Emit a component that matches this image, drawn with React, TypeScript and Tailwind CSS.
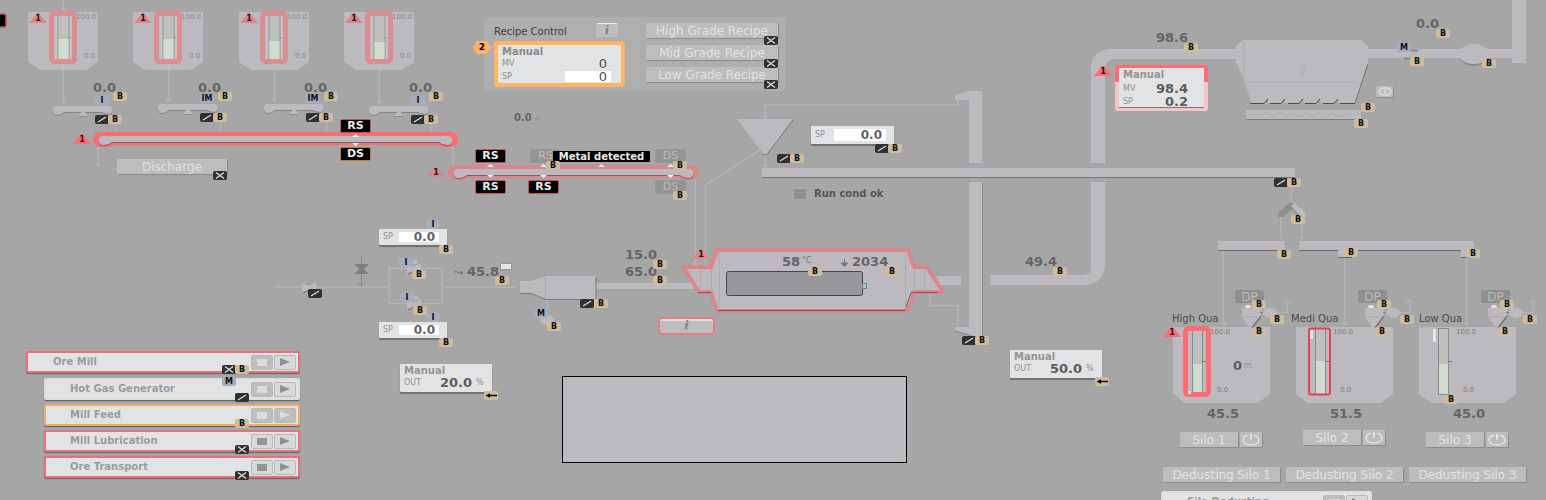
import React from "react";
import type { ReactNode } from "react";

type Kind = "B" | "I" | "IM" | "M" | "slash" | "cross" | "arrow";
type Mark = [Kind, number, number];

const SHAPE = "#bcbabe";
const LINE = "#b4b3b6";
const SHADOW = "#757575";
const ALARM = "#ff6b72";
const ALARM_MUTED = "#da868b";

const at = (x: number, y: number) => ({ left: x, top: y });

function Node({ x, y, className = "", children }: { x: number; y: number; className?: string; children: ReactNode }) {
  return (
    <div className={`absolute ${className}`} style={at(x, y)}>
      {children}
    </div>
  );
}

/* Text anchored at its left edge and vertical centre */
function Label({ x, y, className = "", children }: { x: number; y: number; className?: string; children: ReactNode }) {
  return (
    <span className={`absolute whitespace-nowrap leading-4 ${className}`} style={at(x, y - 8)}>
      {children}
    </span>
  );
}

function Value({ x, y, children }: { x: number; y: number; children: ReactNode }) {
  return (
    <Label x={x} y={y} className="text-[13px] font-bold text-[#646464]">
      {children}
    </Label>
  );
}

function Badge({ kind, x, y }: { kind: Kind; x: number; y: number }) {
  const pos = at(x - 7, y - 4);
  if (kind === "slash" || kind === "cross") {
    return (
      <svg className="absolute h-[9px] w-[14px]" style={pos} viewBox="0 0 14 9" aria-hidden="true">
        <rect width="14" height="9" rx="2" fill="#303030" />
        <path d={kind === "slash" ? "M3 7 L11 2" : "M3 1.500 L11 7.500 M3 7.500 L11 1.500"} stroke="#dcdcdc" strokeWidth="1.3" />
      </svg>
    );
  }
  if (kind === "arrow") {
    return (
      <svg className="absolute h-[9px] w-[14px]" style={pos} viewBox="0 0 14 9" aria-hidden="true">
        <rect width="14" height="9" rx="2" fill="#cfbc9d" />
        <path d="M1.5 4.5 L6 2.2 V3.8 H13 V5.2 H6 V6.8 Z" fill="#000" />
      </svg>
    );
  }
  const tone = kind === "B" ? "bg-[#cfbc9d]" : "bg-[#a5adbf]";
  return (
    <span
      className={`absolute flex h-[9px] min-w-[14px] items-center justify-center rounded-[2px] text-[8px] leading-[9px] font-bold text-[#101010] ${tone}`}
      style={pos}
    >
      {kind}
    </span>
  );
}

function AlarmTriangle({ x, y, bright = false }: { x: number; y: number; bright?: boolean }) {
  return (
    <Node x={x - 9} y={y} className="flex h-[11px] w-[18px] items-end justify-center">
      <svg className="absolute inset-0" viewBox="0 0 18 11" aria-hidden="true">
        <path d="M9 0 L18 11 H0 Z" fill={bright ? ALARM : ALARM_MUTED} />
      </svg>
      <span className="relative text-[8px] leading-[9px] font-bold text-[#1c1010]">1</span>
    </Node>
  );
}

const tagTones = {
  red: "bg-black text-[#ececec] border-[#c4525c] font-bold",
  orange: "bg-black text-[#ececec] border-[#c47a3c] font-bold",
  idle: "bg-[#949494] text-[#bdbdb0] border-[#989898]",
};

function Tag({ x, y, tone, children }: { x: number; y: number; tone: keyof typeof tagTones; children: ReactNode }) {
  return (
    <span
      className={`absolute flex h-[14px] w-[31px] items-center justify-center rounded-[2px] border text-[11px] leading-3 ${tagTones[tone]}`}
      style={at(x - 15, y - 7)}
    >
      {children}
    </span>
  );
}

const raised = "rounded-[1px] bg-[#bdbdbd] shadow-[1px_1px_1px_#8a8a8a]";

function PlainButton({ x, y, className = "", children }: { x: number; y: number; className?: string; children: ReactNode }) {
  return (
    <button
      type="button"
      className={`absolute flex h-[15px] items-center justify-center whitespace-nowrap text-[12px] leading-[14px] text-[#e2e2e2] ${raised} ${className}`}
      style={at(x, y)}
    >
      {children}
    </button>
  );
}

function PowerButton({ x, y, name }: { x: number; y: number; name: string }) {
  return (
    <button type="button" aria-label={name} className={`absolute flex h-[15px] w-[22px] items-center justify-center ${raised}`} style={at(x, y)}>
      <svg className="h-[13px] w-[20px]" viewBox="0 0 20 13" fill="none" stroke="#e2e2e2" strokeWidth="1.5" aria-hidden="true">
        <path d="M6.500 2.200 C-0.500 5 1 12 10 12 C19 12 20.500 5 13.500 2.200" />
        <path d="M10 1 V6.500" strokeWidth="2" />
      </svg>
    </button>
  );
}

const panel = "bg-[#e1e3e5] shadow-[0_2px_1px_#707070]";

function SetpointPanel({ x, y, id, name, wide = false }: { x: number; y: number; id: string; name: string; wide?: boolean }) {
  return (
    <Node x={x} y={y} className={`flex items-center rounded-[1px] pl-1 ${panel} ${wide ? "h-[18px] w-[83px] pr-2" : "h-4 w-[68px] pr-2"}`}>
      <label htmlFor={id} aria-label={name} className={`text-[8px] leading-3 text-[#8f8f8f] ${wide ? "w-[19px]" : "w-4"}`}>
        SP
      </label>
      <input
        id={id}
        defaultValue="0.0"
        className={`min-w-0 flex-1 bg-white pr-1 text-right text-[12px] font-bold text-[#646464] outline-none ${
          wide ? "h-3 leading-3" : "h-[10px] leading-[10px]"
        }`}
      />
    </Node>
  );
}

function OutputPanel({ x, y, value }: { x: number; y: number; value: string }) {
  return (
    <Node x={x} y={y} className={`flex h-7 w-[92px] flex-col rounded-[1px] px-1 pt-[1px] ${panel}`}>
      <span className="text-[10px] leading-3 font-bold text-[#949494]">Manual</span>
      <div className="flex items-center text-[8px] leading-3 text-[#8f8f8f]">
        <span className="w-8">OUT</span>
        <span className="flex-1 text-right text-[13px] font-bold text-[#5c5c5c]">{value}</span>
        <span className="ml-1 w-3">%</span>
      </div>
    </Node>
  );
}

/* ---------- drawings ---------- */

function Belt({ x1, x2, y, color }: { x1: number; x2: number; y: number; color: string }) {
  const inner = `M${x1 + 10} ${y + 4} H${x2 - 10} a4.500 4.500 0 0 1 0 9 q-5 0.500 -9 -3 H${x1 + 19} q-4 3.500 -9 3 a4.500 4.500 0 0 1 0 -9 Z`;
  return (
    <g>
      <path
        d={`M${x1 + 7} ${y} H${x2 - 7} a7 7.500 0 0 1 0 15 q-8 1 -14 -2 H${x1 + 21} q-6 3 -14 2 a7 7.500 0 0 1 0 -15 Z`}
        fill={color}
      />
      <path d={inner} fill="#8a5a60" transform="translate(0 1)" />
      <path d={inner} fill={SHAPE} />
    </g>
  );
}

function FeedTank({ x, dy, level }: { x: number; dy: number; level: number }) {
  return (
    <g transform={`translate(${x} 0)`}>
      <path d="M0 12 H70 V62 L58 70 H12 L0 62 Z" fill={SHAPE} />
      <rect x="27" y="14" width="17" height="47" fill="#c4c2c5" />
      <rect x="30" y="14" width="11" height="47" fill="#bfbfbf" stroke="#969696" />
      <rect x="30.5" y={level} width="10" height={61 - level} fill="#d0dccf" />
      <path d="M41 37.500 h2" stroke="#909090" />
      <rect x="23.500" y="13.500" width="23" height="48" rx="3" fill="none" stroke="#dc8d92" strokeWidth="5" />
      <path d={`M35.500 70 V${103 + dy} m-2 -2 l2 2 l2 -2`} stroke={LINE} fill="none" strokeWidth="1.500" />
      <g transform={`translate(0 ${dy})`}>
        <path d="M27 107 H82 a5 4.500 0 0 1 0 8 q-5 0 -8 -2 H36 q-3 3 -8 3 a5 5 0 0 1 -1 -9 Z" fill="#858585" />
        <path d="M27 106 H82 a5 4.500 0 0 1 0 8 q-5 0 -8 -2 H36 q-3 3 -8 3 a5 5 0 0 1 -1 -9 Z" fill={SHAPE} />
        <path d="M50 116.500 H60" stroke="#8f8f8f" />
        <path d="M50 116 L55 110 L60 116 Z" fill={SHAPE} />
      </g>
      <path d="M87.500 119 V131" stroke={LINE} strokeWidth="1.500" />
    </g>
  );
}

function Silo({ x, level }: { x: number; level: number }) {
  return (
    <g transform={`translate(${x} 0)`}>
      <path d="M0 327 H97 V394 L85 403 H12 L0 394 Z" fill={SHAPE} />
      <rect x="19.500" y="328.500" width="10" height="66" fill="#bfbfbf" stroke="#8a8a8a" />
      <rect x="20" y={level} width="9" height={394 - level} fill="#d0dccf" />
      <path d="M30 361.500 h3" stroke="#707070" />
    </g>
  );
}

function DustFilter({ x }: { x: number }) {
  return (
    <g transform={`translate(${x} 0)`}>
      <path d="M3 308 H20 V316 L12 328 H9 L1 317 V308 Z" fill={SHAPE} />
      <path d="M20 316 L11 328" stroke="#6f6f6f" strokeWidth="1.300" />
      <path d="M1 317 H19" stroke="#aaa8ac" />
      <rect x="4" y="305" width="6" height="3" rx="1.500" fill="#e4e4e4" />
      <path d="M19 312.500 H46 V302 m-4 1 l4 -3 l4 3" stroke={LINE} fill="none" strokeWidth="1.500" />
      <path d="M19 312.500 h6" stroke="#808080" />
      <ellipse cx="29" cy="313" rx="7" ry="5" fill={SHAPE} />
    </g>
  );
}

function Valve({ x, y, color = SHAPE }: { x: number; y: number; color?: string }) {
  return (
    <g transform={`translate(${x} ${y})`}>
      <path d="M-7 -4 L0 -1 L7 -5 V6 L0 2 L-7 6 Z" fill={color} />
      <path d="M-6 6 L0 3" stroke="#707070" />
    </g>
  );
}

const tanks = [
  { x: 28, dy: 0, level: 39, mode: "I" as Kind },
  { x: 133, dy: -2, level: 39, mode: "IM" as Kind },
  { x: 239, dy: -2, level: 41, mode: "IM" as Kind },
  { x: 344, dy: 0, level: 42, mode: "I" as Kind },
];

const silos = [
  { x: 1173, level: 364, title: "High Qua", titleX: 1172, value: "45.5", button: "Silo 1", dy: 0, filter: 1241 },
  { x: 1296, level: 361, title: "Medi Qua", titleX: 1291, value: "51.5", button: "Silo 2", dy: -2, filter: 1364 },
  { x: 1419, level: 364, title: "Low Qua", titleX: 1419, value: "45.0", button: "Silo 3", dy: 0, filter: 1487 },
];

const marks: Mark[] = [
  ["cross", 220, 175], ["B", 553, 165], ["B", 680, 165], ["B", 680, 195],
  ["cross", 771, 40], ["cross", 771, 63], ["cross", 771, 84],
  ["slash", 784, 158], ["B", 797, 158], ["slash", 882, 148], ["B", 895, 148],
  ["B", 815, 271], ["B", 892, 271], ["B", 660, 264], ["B", 660, 280],
  ["slash", 587, 303], ["B", 601, 303], ["M", 541, 313], ["B", 554, 326],
  ["slash", 969, 340], ["B", 982, 340], ["B", 1060, 271], ["arrow", 1102, 381],
  ["slash", 315, 293], ["I", 406, 262], ["B", 419, 274], ["I", 407, 297], ["B", 420, 310],
  ["I", 433, 224], ["B", 446, 249], ["I", 433, 317], ["B", 446, 342], ["B", 502, 280], ["arrow", 491, 395],
  ["B", 1191, 47], ["B", 1443, 33], ["M", 1404, 47], ["B", 1417, 61], ["B", 1489, 63],
  ["B", 1368, 107], ["B", 1361, 123], ["slash", 1281, 182], ["B", 1294, 182], ["B", 1298, 219],
  ["B", 1284, 254], ["B", 1351, 252], ["B", 1473, 253],
  ["B", 1259, 304], ["B", 1384, 304], ["B", 1507, 304],
  ["B", 1277, 319], ["B", 1407, 319], ["B", 1530, 319],
  ["B", 1259, 331], ["B", 1382, 331], ["B", 1505, 331], ["B", 1451, 399],
];

function PlantDrawing() {
  return (
    <svg className="absolute inset-0 h-full w-full" aria-hidden="true">
      <path d="M63.500 0 V10 m-2 -2 l2 2 l2 -2" stroke={LINE} fill="none" strokeWidth="1.500" />
      {tanks.map((t) => (
        <FeedTank key={t.x} x={t.x} dy={t.dy} level={t.level} />
      ))}

      <g fill="none" stroke={LINE} strokeWidth="1.500">
        <path d="M98 145 V166 m-2 -1 h4" />
        <path d="M453 145 V166" />
        <path d="M695.500 178 V266 m-3 -3 l3 3 l3 -3" />
        <path d="M760 150 L705.500 185 V266" />
        <path d="M958 100 V105 H765 V118 m-2 -2 l2 2 l2 -2" />
        <path d="M765 155 V167 m-2 -2 l2 2 l2 -2" />
        <path d="M930 292 V305.500 H958 V326" />
        <path d="M274 287 H389 M442 287 H517 M389 268.500 H442 V303.500 H389 Z" />
        <path d="M547 298 V315" />
        <path d="M1291.500 186 V203" />
        <path d="M1281 217 V239 m-2 -1 h4 M1302 219 V239 m-2 -2 l2 2 l2 -2" />
        <path d="M1223.500 250 V325 m-3 -2 l3 2 l3 -2 M1344.500 257 V325 m-3 -2 l3 2 l3 -2 M1466.500 257 V325 m-3 -1 h5" />
      </g>

      <rect x="-10" y="14" width="16" height="13" rx="2" fill="#000" stroke="#b9555e" strokeWidth="1.500" />
      <Belt x1={93} x2={458} y={132} color={ALARM} />
      <Belt x1={448} x2={699} y={165} color={ALARM_MUTED} />
      <g fill="#f0f0f0">
        <path d="M352 137 l3.500 -3 l3.500 3z M352 143 l3.500 3 l3.500 -3z" />
        {[490, 543, 601, 670].map((x) => (
          <path key={x} d={`M${x - 3} 167 l3.500 -3 l3.500 3z`} />
        ))}
        {[490, 543, 670].map((x) => (
          <path key={x} d={`M${x - 3} 175 l3.500 3 l3.500 -3z`} />
        ))}
      </g>

      {/* feed hopper and bucket elevator */}
      <path d="M737 119 H793 L767 155 H764 Z" fill={SHAPE} />
      <path d="M793 120 L767 154.500 H763" fill="none" stroke="#777" />
      <path d="M955 95 L969 91 H982 V163 H969 V100 H955 Z" fill={SHAPE} />
      <path d="M969 182 H982 V336 H972 L955 330 V327 H969 Z" fill={SHAPE} />
      <path d="M982.500 182 V336 M955 331 L972 336" stroke="#8a8a8a" />
      <rect x="762" y="168" width="533" height="10" fill={SHAPE} />
      <path d="M762 177.500 H1295" stroke={SHADOW} />

      {/* exhaust duct */}
      <rect x="925" y="276" width="36" height="9" fill={SHAPE} />
      <path d="M990 275 H1083 Q1091 275 1091 268 V182 H1105 V262 Q1105 285 1082 285 H990 Z" fill={SHAPE} />
      <path d="M1091 163 V68 Q1091 49 1114 49 H1240 V59 H1116 Q1105 59 1105 70 V163 Z" fill={SHAPE} />
      <rect x="1366" y="49" width="146" height="9" fill={SHAPE} />
      <rect x="1512" y="0" width="14" height="63" fill={SHAPE} />

      {/* bag filter */}
      <path d="M1236 46 L1243 40 H1361 L1368 46 V62 L1355 103 H1251 L1245 82 L1236 62 Z" fill={SHAPE} />
      <path d="M1244 41 V82 M1244 82.500 H1361" stroke="#b0aeb2" fill="none" />
      <path d="M1368 64 L1355 103" stroke={SHADOW} />
      <g fill="#a6a6a6">
        {[1263, 1280, 1298, 1315, 1333].map((x) => (
          <path key={x} d={`M${x} 104 L${x + 5} 98 V104 Z`} />
        ))}
      </g>
      <path
        d="M1250 103.500 H1264 L1268 99 M1270 103.500 H1281 L1285 99 M1288 103.500 H1299 L1303 99 M1305 103.500 H1316 L1320 99 M1323 103.500 H1334 L1338 99 M1340 103.500 H1355"
        stroke="#4c4c4c"
        fill="none"
      />
      <path d="M1300 67 h5 v2 h-4 v5 h3 v-4" stroke="#b2b0b4" fill="none" />
      <rect x="1246" y="110" width="115" height="9" fill={SHAPE} />
      <path d="M1246 119.500 H1361" stroke="#7d7d7d" />
      <path d="M1248 115 H1262 l5 -3 l7 5 l6 -4 l7 4 l6 -4 l7 4 l6 -4 l7 4 l6 -4 l7 4 l6 -4 l7 4 l6 -3 h6" stroke="#b0aeb2" fill="none" />
      <path d="M1404 50.500 H1418 M1404 58.500 H1414" stroke="#858585" strokeWidth="2" />
      <path d="M1460 56 a14 10 0 0 0 28 0" fill="#8a8a8a" />
      <ellipse cx="1474" cy="54" rx="15" ry="10" fill={SHAPE} />

      {/* burner */}
      <rect x="594" y="283" width="106" height="6" fill={SHAPE} />
      <path d="M520 281 H531 L546 276 H596 V299 H546 L531 293 H520 Z" fill={SHAPE} />
      <path d="M520 293.500 H531 L546 299.500 H596 V277" stroke="#7c7c7c" fill="none" />
      <path d="M545.500 277 V299" stroke="#a9a9ab" />
      <ellipse cx="547" cy="320" rx="7" ry="5" fill={SHAPE} />

      {/* mill */}
      <path
        d="M683 267 H711 L717 250 H908 L914 267 H927 L943 292 H914 L908 311 H717 L711 292 H699 Z"
        fill={SHAPE}
        stroke={ALARM_MUTED}
        strokeWidth="4"
        strokeLinejoin="round"
      />
      <path d="M718 310.500 H905 L911 292.500 H938 M711 292.500 H698" stroke="#77595c" fill="none" />
      <path d="M719.500 252 V309 M905.500 252 V309 M700.500 269 V291 M711.500 269 V291 M914.500 269 V291 M924.500 269 V291" stroke="#aeacb0" />
      <rect x="726.500" y="271.500" width="136" height="24" rx="2" fill="#98979c" stroke="#454545" />
      <rect x="862.500" y="283.500" width="4" height="5" fill="#9fd3a6" stroke="#6e8a72" />
      <path d="M844.500 259 V264 M841 263 H848 L844.500 266.500 Z" stroke="#777" fill="#777" />

      {/* gas train */}
      <Valve x={309} y={287} />
      <Valve x={414} y={268} />
      <Valve x={414} y={304} />
      <ellipse cx="415" cy="298" rx="4" ry="2" fill={SHAPE} />
      <ellipse cx="414" cy="262" rx="4" ry="2" fill={SHAPE} />
      <path d="M361.500 257 V285 m-3 -1 l3 2 l3 -2" stroke="#8b8b8b" fill="none" />
      <path d="M354 264 H369 L364 269 L369 274 H354 L359 269 Z" fill="#7f7f7f" />
      <path d="M454 272 q3 -1 5 1 h4 m-3 -2 l3 2 l-3 1" stroke="#707070" fill="none" />
      <rect x="500.500" y="263.500" width="11" height="6" rx="1" fill="#e6e6e6" stroke="#959595" />

      {/* distribution to silos */}
      <path d="M1278 213 L1290 202 L1296 205 L1284 217 H1278 Z" fill="#8f8f8f" />
      <path d="M1291 206 L1295 203 L1306 213 V218 H1302 Z" fill={SHAPE} />
      <path d="M1291 207 L1301 218 H1306" stroke="#777" fill="none" />
      <rect x="1218" y="241" width="67" height="9" fill={SHAPE} />
      <rect x="1299" y="241" width="175" height="9" fill={SHAPE} />
      <rect x="1338" y="249" width="14" height="8" fill={SHAPE} />
      <rect x="1461" y="249" width="10" height="8" fill={SHAPE} />
      <path d="M1218 250.500 H1285 M1299 250.500 H1338 M1352 250.500 H1461 M1338 257.500 H1352 M1461 257.500 H1468" stroke="#666" />

      {silos.map((s) => (
        <Silo key={s.x} x={s.x} level={s.level} />
      ))}
      {silos.map((s) => (
        <DustFilter key={s.x} x={s.filter} />
      ))}
      <rect x="1185.500" y="328.500" width="23" height="66" rx="3" fill="none" stroke={ALARM} strokeWidth="5" />
      <rect x="1309" y="328.500" width="21" height="66" rx="2" fill="none" stroke="#de4552" strokeWidth="2" />
      <path d="M1311.500 330 V339 M1434.500 329 V342 M1189.500 391 V394" stroke="#e6e6e6" strokeWidth="3" />
    </svg>
  );
}

/* ---------- start sequence list ---------- */

type RowProps = { name: string; tone: string; className: string; stop?: "active" | "off"; play?: "on" | "off"; children?: ReactNode };

const toneRing: Record<string, string> = {
  red: "border-[#e8707a]",
  orange: "border-[#eeae66]",
  none: "border-[#dcdee0]",
};

function GroupRow({ name, tone, className, stop = "off", play = "on", children }: RowProps) {
  return (
    <li
      className={`relative flex h-[22px] items-center gap-[1px] rounded-[2px] border-2 bg-[#e1e3e5] pr-[2px] shadow-[0_1px_1px_#606060] ${className} ${toneRing[tone]}`}
    >
      <span className="flex-1 text-[10px] leading-4 font-bold whitespace-nowrap text-[#9b9b9b]">{name}</span>
      <button
        type="button"
        aria-label={`Stop ${name}`}
        className={`flex h-[15px] w-[22px] items-center justify-center rounded-[2px] border border-[#b8b8b8] ${stop === "off" ? "bg-[#bebebe]" : "bg-[#d8d9db]"}`}
      >
        <span className={`h-[7px] w-[10px] ${stop === "off" ? "bg-[#dcdcdc]" : "bg-[#949494]"}`} />
      </button>
      <button
        type="button"
        aria-label={`Start ${name}`}
        className={`flex h-[15px] w-[22px] items-center justify-center rounded-[2px] border border-[#b8b8b8] ${play === "off" ? "bg-[#bebebe]" : "bg-[#d8d9db]"}`}
      >
        <svg className="h-2 w-[10px]" viewBox="0 0 10 8" aria-hidden="true">
          <path d="M0 0 L10 4 L0 8 Z" fill={play === "off" ? "#dcdcdc" : "#8f8f8f"} />
        </svg>
      </button>
      {children}
    </li>
  );
}

function RecipeControl() {
  return (
    <section aria-label="Recipe Control" className="absolute top-[17px] left-[484px] h-[74px] w-[301px] rounded bg-[#aeaeae]">
      <div className="flex justify-between pt-[6px] pr-[7px] pl-[10px]">
        <div className="w-[131px]">
          <div className="flex h-[18px] items-start justify-between pr-[7px]">
            <h2 className="text-[10px] leading-[18px] text-[#3f3f3f]">Recipe Control</h2>
            <button
              type="button"
              aria-label="Recipe information"
              className="h-[14px] w-[22px] rounded-[2px] border-t border-[#ececec] bg-[#bdbdbd] font-['DejaVu_Serif',serif] text-[11px] leading-3 font-bold text-[#7c7c7c] italic"
            >
              i
            </button>
          </div>
          <div className="rounded-[3px] border-4 border-[#ffb464] bg-[#e1e3e5] pr-[10px] pl-1">
            <div className="text-[10px] leading-[13px] font-bold text-[#8a8a8a]">Manual</div>
            <div className="flex justify-between text-[8px] leading-3 text-[#8f8f8f]">
              <span>MV</span>
              <span className="pr-1 text-[13px] text-[#4d4d4d]">0</span>
            </div>
            <div className="flex h-[13px] items-center justify-between text-[8px] leading-3 text-[#8f8f8f]">
              <label htmlFor="recipe-sp">SP</label>
              <input id="recipe-sp" defaultValue="0" className="h-[11px] w-[46px] bg-white pr-1 text-right text-[13px] leading-[11px] text-[#4d4d4d] outline-none" />
            </div>
          </div>
        </div>
        <div className="flex w-[132px] flex-col gap-[7px]">
          {["High Grade Recipe", "Mid Grade Recipe", "Low Grade Recipe"].map((r) => (
            <button key={r} type="button" className={`h-[15px] text-[12px] leading-[14px] whitespace-nowrap text-[#e2e2e2] ${raised}`}>
              {r}
            </button>
          ))}
        </div>
      </div>
    </section>
  );
}

export default function App() {
  return (
    <main className="relative h-screen w-full overflow-hidden bg-[#a6a6a6] font-['DejaVu_Sans',sans-serif]">
      <PlantDrawing />

      {tanks.map((t) => (
        <React.Fragment key={t.x}>
          <AlarmTriangle x={t.x + 10} y={12} />
          <Label x={t.x + 48} y={17} className="text-[7px] text-[#8b8b8b]">100.0</Label>
          <Label x={t.x + 56} y={56} className="text-[7px] text-[#8b8b8b]">0.0</Label>
          <Value x={t.x + 65} y={88}>0.0</Value>
          <Badge kind="B" x={t.x + 92} y={96} />
          <Badge kind={t.mode} x={t.x + 74} y={100 + t.dy} />
          <Badge kind="slash" x={t.x + 74} y={119 + t.dy} />
          <Badge kind="B" x={t.x + 87} y={119 + t.dy} />
        </React.Fragment>
      ))}

      <AlarmTriangle x={82} y={133} bright />
      <AlarmTriangle x={436} y={166} />
      <AlarmTriangle x={701} y={248} />
      <AlarmTriangle x={1103} y={65} bright />
      <AlarmTriangle x={1172} y={326} bright />

      <Tag x={355} y={126} tone="red">RS</Tag>
      <Tag x={355} y={154} tone="orange">DS</Tag>
      <Tag x={490} y={156} tone="red">RS</Tag>
      <Tag x={490} y={187} tone="red">RS</Tag>
      <Tag x={545} y={156} tone="idle">RS</Tag>
      <Tag x={543} y={187} tone="red">RS</Tag>
      <Tag x={670} y={156} tone="idle">DS</Tag>
      <Tag x={670} y={187} tone="idle">DS</Tag>
      <Node x={553} y={151} className="flex h-[11px] w-[97px] items-center justify-center rounded-[1px] bg-black text-[10px] leading-[11px] font-bold whitespace-nowrap text-[#e8e8e8]">
        Metal detected
      </Node>

      <PlainButton x={117} y={159} className="w-[110px]">Discharge</PlainButton>

      <RecipeControl />
      <Node x={473} y={41} className="flex h-[13px] w-[18px] items-center justify-center">
        <svg className="absolute inset-0" viewBox="0 0 18 13" aria-hidden="true">
          <path d="M4 0 H14 L18 6.500 L14 13 H4 L0 6.500 Z" fill="#ffb464" />
        </svg>
        <span className="relative text-[9px] leading-[13px] font-bold text-black">2</span>
      </Node>
      <Label x={514} y={118} className="text-[10px] font-bold text-[#646464]">
        0.0 <span className="text-[7px] font-normal text-[#8f8f8f]">A</span>
      </Label>

      <SetpointPanel x={811} y={126} id="hopper-sp" name="Hopper SP" wide />
      <Node x={794} y={186} className="flex items-center gap-2">
        <input id="run-cond" type="checkbox" className="h-[10px] w-3 appearance-none rounded-[2px] bg-[#8f8f8f]" />
        <label htmlFor="run-cond" className="text-[10px] leading-4 font-bold whitespace-nowrap text-[#555555]">
          Run cond ok
        </label>
      </Node>

      {/* gas and burner readings */}
      <SetpointPanel x={379} y={229} id="gas-sp-1" name="Gas valve 1 SP" />
      <SetpointPanel x={379} y={322} id="gas-sp-2" name="Gas valve 2 SP" />
      <Value x={467} y={272}>45.8</Value>
      <Value x={625} y={255}>15.0</Value>
      <Value x={625} y={272}>65.0</Value>
      <OutputPanel x={400} y={364} value="20.0" />
      <OutputPanel x={1010} y={350} value="50.0" />

      {/* mill readings */}
      <Value x={782} y={262}>58</Value>
      <Label x={802} y={261} className="text-[8px] text-[#777777]">°C</Label>
      <Value x={852} y={262}>2034</Value>
      <button
        type="button"
        aria-label="Mill information"
        className="absolute top-[317px] left-[658px] h-[18px] w-[57px] rounded border-2 border-[#ec7a82] bg-[#bdbdbd] font-['DejaVu_Serif',serif] text-[11px] leading-3 font-bold text-[#7c7c7c] italic shadow-[inset_0_2px_0_#dedede]"
      >
        i
      </button>
      <div className="absolute top-[376px] left-[562px] h-[87px] w-[345px] border border-black bg-[#bcbabe]" />

      {/* exhaust readings */}
      <Value x={1025} y={262}>49.4</Value>
      <Value x={1156} y={38}>98.6</Value>
      <Value x={1416} y={24}>0.0</Value>
      <Node x={1115} y={65} className="rounded-[3px] bg-linear-to-b from-[#ff6b72] from-38% to-[#f6c3c7] to-38% p-1 pt-[3px]">
        <div className="h-[39px] w-[85px] bg-[#e1e3e5] px-1 shadow-[0_1px_0_#777777]">
          <div className="text-[10px] leading-[14px] font-bold text-[#949494]">Manual</div>
          {[["MV", "98.4"], ["SP", "0.2"]].map(([k, v]) => (
            <div key={k} className="flex h-[13px] items-center justify-between pr-3 text-[8px] leading-3 text-[#8f8f8f]">
              <span>{k}</span>
              <span className="text-[13px] leading-3 font-bold text-[#5c5c5c]">{v}</span>
            </div>
          ))}
        </div>
      </Node>
      <button type="button" aria-label="Filter operation" className={`absolute top-[86px] left-[1376px] flex h-[11px] w-[17px] items-center justify-center ${raised}`}>
        <svg className="h-[9px] w-[14px]" viewBox="0 0 14 9" fill="none" stroke="#e2e2e2" aria-hidden="true">
          <ellipse cx="7" cy="4.500" rx="6" ry="3.700" strokeWidth="1.300" />
          <path d="M7 2 V7" strokeWidth="1.300" />
        </svg>
      </button>

      {/* product silos */}
      {silos.map((s, i) => (
        <React.Fragment key={s.x}>
          <span
            className="absolute flex h-[13px] w-[29px] items-center justify-center rounded-[2px] bg-[#8f8f8f] text-[12px] leading-3 text-[#bdbdb0]"
            style={at(s.filter - 6, 290)}
          >
            DP
          </span>
          <Label x={s.titleX} y={319} className="text-[10px] text-[#4a4a4a]">{s.title}</Label>
          <Label x={s.x + 37} y={332} className="text-[7px] text-[#7d7d7d]">100.0</Label>
          <Label x={s.x + 44} y={390} className="text-[7px] text-[#7d7d7d]">0.0</Label>
          <Value x={s.x + 34} y={414}>{s.value}</Value>
          <PlainButton x={s.x + 7} y={432 + s.dy} className="w-[58px]">{s.button}</PlainButton>
          <PowerButton x={s.x + 67} y={432 + s.dy} name={`${s.button} power`} />
          <PlainButton x={s.x - 10} y={467} className="w-[117px]">{`Dedusting Silo ${i + 1}`}</PlainButton>
        </React.Fragment>
      ))}
      <Label x={1233} y={366} className="text-[13px] font-bold text-[#5c5c5c]">0</Label>
      <Label x={1244} y={366} className="text-[8px] text-[#8f8f8f]">m</Label>
      <ul className="absolute top-[491px] left-[1161px] w-[211px]">
        <GroupRow name="Silo Dedusting" tone="none" className="pl-6" />
      </ul>

      {marks.map(([kind, x, y]) => (
        <Badge key={`${x}-${y}`} kind={kind} x={x} y={y} />
      ))}

      <ul className="absolute top-[351px] left-[26px] flex w-[274px] flex-col gap-1">
        <GroupRow name="Ore Mill" tone="red" className="pl-[25px]">
          <Badge kind="cross" x={201} y={16} />
          <Badge kind="B" x={214} y={16} />
        </GroupRow>
        <GroupRow name="Hot Gas Generator" tone="none" className="mt-px ml-[18px] pl-6">
          <Badge kind="M" x={183} y={1} />
          <Badge kind="slash" x={196} y={17} />
        </GroupRow>
        <GroupRow name="Mill Feed" tone="orange" play="off" className="ml-[18px] pl-6">
          <Badge kind="B" x={196} y={17} />
        </GroupRow>
        <GroupRow name="Mill Lubrication" tone="red" stop="active" className="ml-[18px] pl-6">
          <Badge kind="cross" x={196} y={17} />
        </GroupRow>
        <GroupRow name="Ore Transport" tone="red" stop="active" className="ml-[18px] pl-6">
          <Badge kind="cross" x={196} y={17} />
        </GroupRow>
      </ul>
    </main>
  );
}
